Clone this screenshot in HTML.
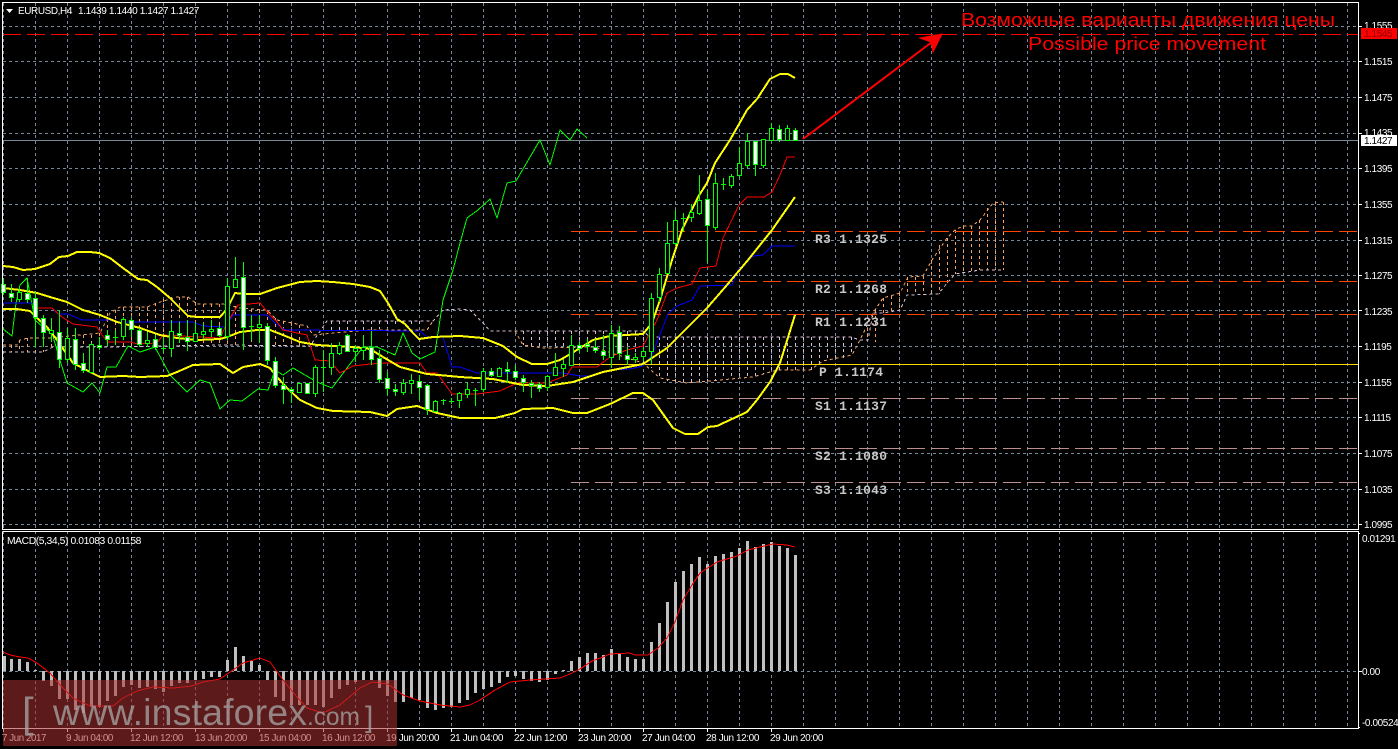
<!DOCTYPE html>
<html><head><meta charset="utf-8"><title>EURUSD,H4</title>
<style>
html,body{margin:0;padding:0;background:#000;width:1398px;height:749px;overflow:hidden}
svg{display:block;position:absolute;left:0;top:0}
text{font-family:"Liberation Sans",sans-serif;font-size:10px;letter-spacing:-.4px;fill:#fff}
.wb rect{width:4px;fill:#fff;stroke:#0f0;stroke-width:1px}
.bb rect{width:4px;fill:#000;stroke:#0f0;stroke-width:1px}
.bars rect{width:3px;fill:#c0c0c0}
.piv{font-family:"Liberation Mono",monospace;font-size:13px;font-weight:bold;fill:#c8c8c8;letter-spacing:0}
.big{font-size:18.5px;fill:#f00;letter-spacing:0}
</style></head><body>
<svg width="1398" height="749" viewBox="0 0 1398 749" xmlns="http://www.w3.org/2000/svg">
<defs>
<pattern id="gv" x="35" y="3" width="32" height="6" patternUnits="userSpaceOnUse"><rect x="0" y="0" width="1" height="3" fill="#778899"/></pattern>
</defs>
<rect width="1398" height="749" fill="#000"/>

<!-- grid -->
<rect x="3" y="3" width="1355" height="526" fill="url(#gv)"/>
<rect x="3" y="532" width="1355" height="196" fill="url(#gv)"/>
<path d="M3 26.5H1358M3 61.5H1358M3 97.5H1358M3 133.5H1358M3 168.5H1358M3 204.5H1358M3 240.5H1358M3 275.5H1358M3 310.5H1358M3 346.5H1358M3 382.5H1358M3 417.5H1358M3 453.5H1358M3 489.5H1358M3 524.5H1358M3 671.5H1358" stroke="#778899" stroke-width="1" stroke-dasharray="3 3" fill="none" shape-rendering="crispEdges"/>

<!-- ichimoku cloud hatch -->
<path d="M11.5 345V352M19.5 340V352M27.5 338V352M35.5 338V352M43.5 338V352M51.5 338V347M59.5 337V347M67.5 336V347M75.5 335V347M83.5 335V347M91.5 335V347M99.5 333V347M107.5 313V347M115.5 310V346M123.5 307V346M131.5 307V346M139.5 307V346M147.5 307V346M155.5 303V346M163.5 299V346M171.5 297V346M179.5 297V346M187.5 297V346M195.5 302V346M203.5 304V346M211.5 304V346M219.5 304V346M227.5 305V346M235.5 306V346M243.5 308V346M251.5 309V346M259.5 310V346M267.5 311V346M275.5 318V346M283.5 321V346M291.5 323V346M299.5 325V346M867.5 328V340M875.5 310V342M883.5 298V313M891.5 296V312M899.5 293V311M907.5 277V295M915.5 277V295M923.5 276V295M931.5 260V295M939.5 245V294M947.5 238V285M955.5 230V274M963.5 226V274M971.5 226V272M979.5 220V270M987.5 208V270M995.5 203V270M1003.5 202V270" stroke="#f4a460" stroke-width="1" stroke-dasharray="3 3" fill="none" shape-rendering="crispEdges"/>
<path d="M331.5 321V333M339.5 321V333M347.5 321V332M355.5 321V331M363.5 321V330M371.5 321V330M379.5 321V329M387.5 321V328M395.5 321V327M403.5 321V326M411.5 321V325M419.5 321V324M523.5 331V345M531.5 331V347M539.5 331V348M547.5 331V347M555.5 331V347M563.5 331V347M571.5 331V347M579.5 331V347M587.5 331V347M595.5 331V347M603.5 331V350M611.5 331V353M619.5 331V356M627.5 331V358M635.5 331V361M643.5 331V363M651.5 337V368M659.5 337V378M667.5 337V381M675.5 337V383M683.5 337V383M691.5 337V383M699.5 337V382M707.5 337V381M715.5 337V380M723.5 337V379M731.5 337V378M739.5 337V377M747.5 337V377M755.5 337V376M763.5 337V374M771.5 337V372M779.5 337V370M787.5 337V370M795.5 337V370M803.5 337V370M811.5 337V370M819.5 337V365M827.5 337V360M835.5 337V359M843.5 337V358M851.5 337V355" stroke="#d8bfd8" stroke-width="1" stroke-dasharray="3 3" fill="none" shape-rendering="crispEdges"/>
<g fill="none" stroke-width="1" stroke-dasharray="3 3" shape-rendering="crispEdges">
<polyline stroke="#f4a460" points="3,345 17,345 20,340 28,338 50,338 100,333 110,313 120,307 147,307 157,303 177,297 188,297 197,304 223,304 240,308 267,310 277,320 307,326 313,335 367,330 427,330 433,321"/>
<polyline stroke="#f4a460" points="515,331 523,345 543,348 593,347 643,363 660,378 687,383 753,377 777,370 810,370 823,361 852,355 860,340 873,313 883,298 900,293 908,277 923,276 932,260 947,238 955,230 963,226 972,226 980,220 993,203 1003,202"/>
<polyline stroke="#d8bfd8" points="3,352 43,352 53,347 107,347 227,345 310,346 327,321 433,321 443,310 460,309 470,310 483,323 490,331 643,331 650,337 851,337 860,340 868,340 873,313 883,313 900,310 907,295 938,294 955,274 980,270 1003,270"/>
</g>

<!-- pivot lines -->
<g fill="none" stroke-width="1" stroke-dasharray="18 6" shape-rendering="crispEdges">
<path d="M571 231.5H1358M571 281.5H1358M571 314.5H1358" stroke="#ff4500"/>
<path d="M571 398.5H1358M571 448.5H1358M571 482.5H1358" stroke="#bc8f8f"/>
<path d="M3 34.5H1358" stroke="#f00"/>
</g>
<path d="M571 364.5H1358" stroke="#ffd700" stroke-width="1" shape-rendering="crispEdges"/>
<path d="M3 140.5H1358" stroke="#778899" stroke-width="1" shape-rendering="crispEdges"/>

<!-- indicators -->
<g fill="none" stroke-linejoin="round" shape-rendering="crispEdges">
<polyline stroke="#0f0" stroke-width="1" points="3,329 12,336 16,303 20,285 27,278 35,320 43,327 52,333 59,357 67,383 83,392 92,383 100,393 107,367 116,367 128,346 140,352 155,347 170,375 187,392 200,380 210,383 220,409 230,400 242,401 258,389 268,390 275,370 283,375 293,368 317,382 332,388 347,368 363,347 377,347 395,355 403,333 412,353 420,359 435,352 443,300 453,270 460,243 467,218 478,210 490,199 497,218 507,183 516,181 540,140 550,165 560,130 570,140 577,129 587,138"/>
<polyline stroke="#00f" stroke-width="1" points="3,303 33,303 37,308 52,308 58,314 68,314 82,320 110,320 120,322 193,322 203,326 225,327 233,315 267,315 275,323 285,330 420,331 427,337 443,337 452,367 460,367 477,373 563,373 580,376 593,376 610,370 630,369 643,366 652,355 668,314 677,306 692,300 700,286 732,285 738,270 753,256 763,255 772,246 795,246"/>
<polyline stroke="#f00" stroke-width="1" points="35,308 52,308 62,317 73,324 97,327 102,335 108,342 130,342 138,344 157,343 163,335 200,337 220,338 227,323 238,305 260,303 270,315 277,322 283,330 307,335 315,360 330,361 340,373 353,366 370,364 387,363 420,363 427,373 437,373 452,394 477,394 500,391 517,383 547,383 567,375 572,367 597,367 610,357 627,350 643,346 657,320 667,293 677,288 692,284 700,268 716,266 723,238 739,205 747,197 764,197 772,192 780,175 787,157 795,157"/>
<g stroke="#ff0" stroke-width="2">
<polyline points="3,266 13,267 23,270 35,269 50,264 59,257 68,256 77,252 90,252 99,253 110,258 123,268 138,279 147,280 157,287 170,298 180,308 188,316 197,317 220,317 227,309 235,293 243,294 260,294 277,288 300,282 317,281 333,282 353,284 370,287 380,291 388,303 397,319 405,324 413,333 419,339 433,337 460,336 483,338 503,346 517,357 532,364 547,364 560,360 572,353 593,340 610,336 643,334 652,323 660,300 672,260 682,230 698,197 707,183 715,163 730,140 747,110 757,99 770,79 780,74 788,74 795,78"/>
<polyline points="3,288 20,290 37,293 50,297 67,302 83,310 100,315 117,322 140,328 160,335 177,338 197,340 220,339 227,337 240,332 257,330 270,330 283,335 300,342 317,345 333,346 353,347 370,349 383,357 400,367 427,374 450,376 460,377 493,379 523,385 547,386 573,382 603,372 643,364 667,348 683,332 707,308 727,285 748,260 772,230 795,197"/>
<polyline points="3,309 17,309 30,311 37,318 47,327 57,340 73,363 90,372 100,377 123,376 140,377 167,376 177,372 193,365 220,364 233,373 243,367 260,364 270,368 277,377 287,388 300,400 317,408 333,411 370,412 387,416 397,409 417,406 437,413 460,418 495,418 515,413 523,409 553,408 573,413 587,413 610,404 633,393 643,393 653,400 673,428 685,434 698,434 708,427 717,426 747,412 757,400 770,382 780,363 795,315"/>
</g>
</g>

<!-- candle wicks -->
<path fill="none" stroke="#0f0" stroke-width="1" shape-rendering="crispEdges" d="M3.5 278V295M11.5 284V302M19.5 287V302M27.5 278V303M35.5 292V347M43.5 315V347M51.5 318V342M59.5 310V368M67.5 328V363M75.5 328V370M83.5 353V373M91.5 343V372M99.5 337V350M107.5 330V346M115.5 330V345M123.5 317V340M131.5 318V337M139.5 328V347M147.5 332V347M155.5 335V350M163.5 337V353M171.5 320V357M179.5 322V343M187.5 320V351M195.5 322V342M203.5 323V338M211.5 320V337M219.5 325V337M227.5 278V340M235.5 257V288M243.5 262V350M251.5 315V340M259.5 315V343M267.5 323V365M275.5 357V388M283.5 377V404M291.5 387V403M299.5 383V393M307.5 383V393M315.5 365V397M323.5 350V392M331.5 343V375M339.5 342V355M347.5 334V352M355.5 345V362M363.5 335V360M371.5 331V365M379.5 350V383M387.5 372V395M395.5 384V396M403.5 379V395M411.5 374V394M419.5 375V400M427.5 384V415M435.5 400V412M443.5 399V405M451.5 398V404M459.5 392V408M467.5 382V398M475.5 388V406M483.5 368V392M491.5 368V377M499.5 367V377M507.5 362V383M515.5 365V380M523.5 375V392M531.5 380V398M539.5 382V392M547.5 375V391M555.5 353V376M563.5 359V377M571.5 335V366M579.5 342V353M587.5 339V352M595.5 339V353M603.5 335V360M611.5 325V368M619.5 326V360M627.5 347V365M635.5 353V363M643.5 347V361M651.5 293V364M659.5 268V302M667.5 222V274M675.5 210V245M683.5 213V232M691.5 204V222M699.5 175V215M707.5 190V263M715.5 173V230M723.5 178V190M731.5 174V188M739.5 147V178M747.5 133V168M755.5 141V176M763.5 139V168M771.5 123V141M779.5 125V142M787.5 125V141M795.5 128V141M113 337.5h5M161 348.5h5M249 326.5h5M321 367.5h5M441 400.5h5M449 401.5h5M473 390.5h5M681 218.5h5M721 184.5h5"/>

<!-- bear bodies (outlined black) -->
<g class="bb" shape-rendering="crispEdges">
<rect x="17.5" y="292.5" height="7"/><rect x="49.5" y="330.5" height="3"/><rect x="65.5" y="338.5" height="21"/><rect x="89.5" y="344.5" height="28"/><rect x="121.5" y="319.5" height="17"/><rect x="145.5" y="340.5" height="3"/><rect x="169.5" y="331.5" height="17"/><rect x="193.5" y="333.5" height="8"/><rect x="201.5" y="331.5" height="3"/><rect x="209.5" y="329.5" height="2"/><rect x="225.5" y="286.5" height="50"/><rect x="233.5" y="279.5" height="8"/><rect x="257.5" y="324.5" height="3"/><rect x="297.5" y="383.5" height="9"/><rect x="313.5" y="367.5" height="26"/><rect x="329.5" y="353.5" height="14"/><rect x="337.5" y="345.5" height="8"/><rect x="353.5" y="348.5" height="3"/><rect x="361.5" y="347.5" height="3"/><rect x="401.5" y="383.5" height="9"/><rect x="409.5" y="380.5" height="3"/><rect x="433.5" y="401.5" height="10"/><rect x="457.5" y="393.5" height="7"/><rect x="465.5" y="389.5" height="5"/><rect x="481.5" y="371.5" height="18"/><rect x="497.5" y="368.5" height="8"/><rect x="545.5" y="376.5" height="11"/><rect x="553.5" y="367.5" height="8"/><rect x="561.5" y="364.5" height="4"/><rect x="569.5" y="345.5" height="20"/><rect x="609.5" y="333.5" height="24"/><rect x="633.5" y="357.5" height="2"/><rect x="641.5" y="351.5" height="5"/><rect x="649.5" y="298.5" height="53"/><rect x="657.5" y="274.5" height="23"/><rect x="665.5" y="243.5" height="30"/><rect x="673.5" y="220.5" height="23"/><rect x="689.5" y="212.5" height="5"/><rect x="697.5" y="200.5" height="13"/><rect x="713.5" y="183.5" height="44"/><rect x="729.5" y="176.5" height="9"/><rect x="737.5" y="163.5" height="12"/><rect x="745.5" y="141.5" height="24"/><rect x="761.5" y="139.5" height="26"/><rect x="769.5" y="128.5" height="12"/><rect x="785.5" y="128.5" height="12"/>
</g>
<!-- bull bodies (white) -->
<g class="wb" shape-rendering="crispEdges">
<rect x="1.5" y="284.5" height="8"/><rect x="9.5" y="293.5" height="4"/><rect x="25.5" y="293.5" height="6"/><rect x="33.5" y="298.5" height="19"/><rect x="41.5" y="318.5" height="14"/><rect x="57.5" y="332.5" height="27"/><rect x="73.5" y="339.5" height="25"/><rect x="81.5" y="363.5" height="7"/><rect x="97.5" y="345.5" height="2"/><rect x="105.5" y="335.5" height="4"/><rect x="129.5" y="320.5" height="9"/><rect x="137.5" y="330.5" height="14"/><rect x="153.5" y="339.5" height="8"/><rect x="177.5" y="333.5" height="2"/><rect x="185.5" y="337.5" height="4"/><rect x="217.5" y="328.5" height="7"/><rect x="241.5" y="277.5" height="50"/><rect x="265.5" y="326.5" height="34"/><rect x="273.5" y="361.5" height="24"/><rect x="281.5" y="385.5" height="4"/><rect x="289.5" y="389.5" height="2"/><rect x="305.5" y="383.5" height="10"/><rect x="345.5" y="335.5" height="16"/><rect x="369.5" y="347.5" height="12"/><rect x="377.5" y="358.5" height="21"/><rect x="385.5" y="378.5" height="10"/><rect x="393.5" y="389.5" height="2"/><rect x="417.5" y="381.5" height="6"/><rect x="425.5" y="385.5" height="24"/><rect x="489.5" y="371.5" height="4"/><rect x="505.5" y="369.5" height="2"/><rect x="513.5" y="371.5" height="6"/><rect x="521.5" y="378.5" height="4"/><rect x="529.5" y="383.5" height="2"/><rect x="537.5" y="384.5" height="4"/><rect x="577.5" y="345.5" height="3"/><rect x="585.5" y="344.5" height="2"/><rect x="593.5" y="347.5" height="3"/><rect x="601.5" y="351.5" height="4"/><rect x="617.5" y="332.5" height="21"/><rect x="625.5" y="355.5" height="4"/><rect x="705.5" y="199.5" height="26"/><rect x="753.5" y="141.5" height="23"/><rect x="777.5" y="129.5" height="10"/><rect x="793.5" y="130.5" height="10"/>
</g>

<!-- arrow -->
<path d="M803 139L932 42" stroke="#f00" stroke-width="2" fill="none"/>
<path d="M942 34L920 38L931 42L933 52Z" fill="#f00" stroke="#f00" stroke-width="1"/>

<!-- macd bars -->
<g class="bars" shape-rendering="crispEdges">
<rect x="3" y="656" height="15"/><rect x="10" y="659" height="12"/><rect x="18" y="659" height="12"/><rect x="26" y="662" height="9"/><rect x="34" y="670" height="1"/><rect x="42" y="671" height="10"/><rect x="50" y="671" height="15"/><rect x="58" y="671" height="28"/><rect x="66" y="671" height="28"/><rect x="74" y="671" height="39"/><rect x="82" y="671" height="42"/><rect x="90" y="671" height="36"/><rect x="98" y="671" height="36"/><rect x="106" y="671" height="30"/><rect x="114" y="671" height="25"/><rect x="122" y="671" height="16"/><rect x="130" y="671" height="14"/><rect x="138" y="671" height="17"/><rect x="146" y="671" height="16"/><rect x="154" y="671" height="18"/><rect x="162" y="671" height="21"/><rect x="170" y="671" height="15"/><rect x="178" y="671" height="12"/><rect x="186" y="671" height="12"/><rect x="194" y="671" height="9"/><rect x="202" y="671" height="8"/><rect x="210" y="671" height="6"/><rect x="218" y="671" height="6"/><rect x="226" y="660" height="11"/><rect x="234" y="647" height="24"/><rect x="242" y="656" height="15"/><rect x="250" y="661" height="10"/><rect x="258" y="665" height="6"/><rect x="266" y="671" height="9"/><rect x="274" y="671" height="26"/><rect x="282" y="671" height="30"/><rect x="290" y="671" height="34"/><rect x="298" y="671" height="34"/><rect x="306" y="671" height="34"/><rect x="314" y="671" height="34"/><rect x="322" y="671" height="36"/><rect x="330" y="671" height="27"/><rect x="338" y="671" height="18"/><rect x="346" y="671" height="14"/><rect x="354" y="671" height="11"/><rect x="362" y="671" height="9"/><rect x="370" y="671" height="9"/><rect x="378" y="671" height="17"/><rect x="386" y="671" height="25"/><rect x="394" y="671" height="31"/><rect x="402" y="671" height="31"/><rect x="410" y="671" height="27"/><rect x="418" y="671" height="29"/><rect x="426" y="671" height="37"/><rect x="434" y="671" height="39"/><rect x="442" y="671" height="37"/><rect x="450" y="671" height="36"/><rect x="458" y="671" height="32"/><rect x="466" y="671" height="29"/><rect x="474" y="671" height="22"/><rect x="482" y="671" height="18"/><rect x="490" y="671" height="16"/><rect x="498" y="671" height="12"/><rect x="506" y="671" height="6"/><rect x="514" y="671" height="5"/><rect x="522" y="671" height="8"/><rect x="530" y="671" height="10"/><rect x="538" y="671" height="11"/><rect x="546" y="671" height="9"/><rect x="554" y="671" height="3"/><rect x="562" y="670" height="1"/><rect x="570" y="661" height="10"/><rect x="578" y="657" height="14"/><rect x="586" y="653" height="18"/><rect x="594" y="653" height="18"/><rect x="602" y="655" height="16"/><rect x="610" y="649" height="22"/><rect x="618" y="654" height="17"/><rect x="626" y="657" height="14"/><rect x="634" y="659" height="12"/><rect x="642" y="659" height="12"/><rect x="650" y="642" height="29"/><rect x="658" y="623" height="48"/><rect x="666" y="602" height="69"/><rect x="674" y="582" height="89"/><rect x="682" y="571" height="100"/><rect x="690" y="564" height="107"/><rect x="698" y="557" height="114"/><rect x="706" y="564" height="107"/><rect x="714" y="556" height="115"/><rect x="722" y="554" height="117"/><rect x="730" y="552" height="119"/><rect x="738" y="548" height="123"/><rect x="746" y="541" height="130"/><rect x="754" y="547" height="124"/><rect x="762" y="544" height="127"/><rect x="770" y="542" height="129"/><rect x="778" y="546" height="125"/><rect x="786" y="548" height="123"/><rect x="794" y="555" height="116"/>
</g>
<polyline fill="none" stroke="#f00" stroke-width="1" shape-rendering="crispEdges" points="3,652 10,655 20,657 28,658 37,663 50,673 60,685 73,698 90,706 113,706 123,698 137,691 153,687 173,688 192,686 203,682 220,679 233,670 243,663 260,658 270,662 283,680 297,697 307,708 323,713 340,705 360,688 372,682 388,684 403,695 420,701 440,705 460,707 470,705 480,700 495,690 510,682 530,680 560,678 570,674 580,669 592,661 603,657 610,654 630,653 635,655 648,655 658,648 667,638 675,622 683,600 692,585 700,573 717,562 737,556 748,550 760,547 773,544 787,545 795,547"/>

<!-- frame -->
<path fill="none" stroke="#fff" stroke-width="1" shape-rendering="crispEdges" d="M2.5 2.5H1358.5V529.5H2.5ZM2.5 531.5H1358.5V728.5H2.5V531.5"/>
<!-- axis ticks -->
<path fill="none" stroke="#fff" stroke-width="1" shape-rendering="crispEdges" d="M1358 26.5h4M1358 61.5h4M1358 97.5h4M1358 133.5h4M1358 168.5h4M1358 204.5h4M1358 240.5h4M1358 275.5h4M1358 310.5h4M1358 346.5h4M1358 382.5h4M1358 417.5h4M1358 453.5h4M1358 489.5h4M1358 524.5h4M1358 533.5h2M1358 671.5h4M1358 727.5h2M3.5 728v4M67.5 728v4M131.5 728v4M195.5 728v4M259.5 728v4M323.5 728v4M387.5 728v4M451.5 728v4M515.5 728v4M579.5 728v4M643.5 728v4M707.5 728v4M771.5 728v4"/>

<!-- title -->
<path d="M6 9h7l-3.5 4z" fill="#fff"/>
<text x="18" y="14" textLength="54" lengthAdjust="spacingAndGlyphs">EURUSD,H4</text>
<text x="78" y="14" textLength="121" lengthAdjust="spacingAndGlyphs">1.1439 1.1440 1.1427 1.1427</text>
<text x="7" y="544" textLength="134" lengthAdjust="spacingAndGlyphs">MACD(5,34,5) 0.01083 0.01158</text>

<!-- price scale -->
<g>
<text x="1364" y="29">1.1555</text><text x="1364" y="65">1.1515</text><text x="1364" y="101">1.1475</text><text x="1364" y="136">1.1435</text><text x="1364" y="172">1.1395</text><text x="1364" y="208">1.1355</text><text x="1364" y="244">1.1315</text><text x="1364" y="279">1.1275</text><text x="1364" y="315">1.1235</text><text x="1364" y="350">1.1195</text><text x="1364" y="386">1.1155</text><text x="1364" y="421">1.1115</text><text x="1364" y="457">1.1075</text><text x="1364" y="493">1.1035</text><text x="1364" y="528">1.0995</text>
<text x="1362" y="542">0.01291</text><text x="1362" y="675">0.00</text><text x="1362" y="726">-0.00524</text>
</g>
<rect x="1361" y="28" width="36" height="11" fill="#f00"/>
<text x="1364" y="37" style="fill:#8b0000">1.1545</text>
<rect x="1361" y="135" width="36" height="11" fill="#fff"/>
<text x="1364" y="144" style="fill:#000">1.1427</text>

<!-- time scale -->
<g>
<text x="2" y="741" textLength="44" lengthAdjust="spacingAndGlyphs">7 Jun 2017</text><text x="66" y="741" textLength="47" lengthAdjust="spacingAndGlyphs">9 Jun 04:00</text><text x="130" y="741" textLength="53" lengthAdjust="spacingAndGlyphs">12 Jun 12:00</text><text x="195" y="741" textLength="52" lengthAdjust="spacingAndGlyphs">13 Jun 20:00</text><text x="259" y="741" textLength="52" lengthAdjust="spacingAndGlyphs">15 Jun 04:00</text><text x="322" y="741" textLength="53" lengthAdjust="spacingAndGlyphs">16 Jun 12:00</text><text x="386" y="741" textLength="53" lengthAdjust="spacingAndGlyphs">19 Jun 20:00</text><text x="450" y="741" textLength="53" lengthAdjust="spacingAndGlyphs">21 Jun 04:00</text><text x="514" y="741" textLength="53" lengthAdjust="spacingAndGlyphs">22 Jun 12:00</text><text x="578" y="741" textLength="53" lengthAdjust="spacingAndGlyphs">23 Jun 20:00</text><text x="642" y="741" textLength="53" lengthAdjust="spacingAndGlyphs">27 Jun 04:00</text><text x="706" y="741" textLength="53" lengthAdjust="spacingAndGlyphs">28 Jun 12:00</text><text x="770" y="741" textLength="53" lengthAdjust="spacingAndGlyphs">29 Jun 20:00</text>
</g>

<!-- pivot labels -->
<text class="piv" x="815" y="243" textLength="72">R3 1.1325</text>
<text class="piv" x="815" y="293" textLength="72">R2 1.1268</text>
<text class="piv" x="815" y="326" textLength="72">R1 1.1231</text>
<text class="piv" x="819" y="376" textLength="64">P 1.1174</text>
<text class="piv" x="815" y="410" textLength="72">S1 1.1137</text>
<text class="piv" x="815" y="460" textLength="72">S2 1.1080</text>
<text class="piv" x="815" y="494" textLength="72">S3 1.1043</text>

<!-- annotation -->
<text class="big" x="961" y="26" textLength="374" lengthAdjust="spacingAndGlyphs">Возможные варианты движения цены</text>
<text class="big" x="1028" y="50" textLength="238" lengthAdjust="spacingAndGlyphs">Possible price movement</text>

<!-- watermark -->
<rect x="3" y="680" width="394" height="66" fill="#a72f2f" fill-opacity=".55"/>
<g fill-opacity=".75">
<text x="22" y="727" style="font-size:42px;fill:#a8a8a8;letter-spacing:0">[</text>
<text x="53" y="725" textLength="254" style="font-size:37.5px;fill:#a8a8a8;letter-spacing:0">www.instaforex</text>
<text x="307" y="725" textLength="53" style="font-size:24.6px;fill:#a8a8a8;letter-spacing:0">.com</text>
<text x="365" y="727" style="font-size:30px;fill:#a8a8a8;letter-spacing:0">]</text>
</g>
</svg>
</body></html>
